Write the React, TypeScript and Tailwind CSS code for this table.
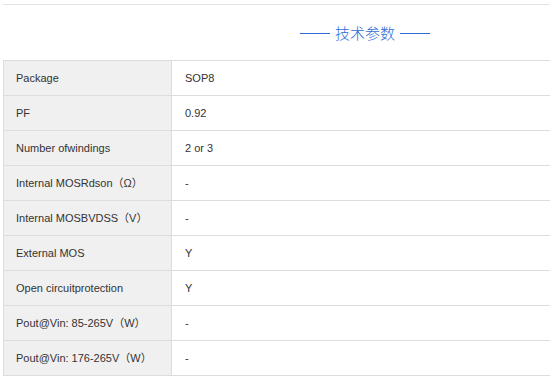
import React from "react";

type Spec = {
  label: string;
  value: string;
};

const specs: Spec[] = [
  { label: "Package", value: "SOP8" },
  { label: "PF", value: "0.92" },
  { label: "Number ofwindings", value: "2 or 3" },
  { label: "Internal MOSRdson（Ω）", value: "-" },
  { label: "Internal MOSBVDSS（V）", value: "-" },
  { label: "External MOS", value: "Y" },
  { label: "Open circuitprotection", value: "Y" },
  { label: "Pout@Vin: 85-265V（W）", value: "-" },
  { label: "Pout@Vin: 176-265V（W）", value: "-" },
];

export default function App() {
  return (
    <div className="w-[550px] h-[382px] overflow-hidden bg-white font-['Liberation_Sans',Arial,'Noto_Sans_CJK_SC',sans-serif]">
      <div className="w-[724px] ml-[3px] mt-[4px] border-t border-[#e3e3e3]">
        {/* Title */}
        <div className="h-[55px] flex items-center justify-center pt-[1px]">
          <h3 className="flex items-center gap-[5px] text-[15px] text-[#2f6bd4] font-normal">
            <span className="inline-block w-[30px] h-px bg-[#2f6bd4]" />
            <span className="font-['Noto_Sans_CJK_SC',sans-serif] font-light leading-[20px]">技术参数</span>
            <span className="inline-block w-[30px] h-px bg-[#2f6bd4]" />
          </h3>
        </div>
        {/* Spec table */}
        <table className="w-full border-collapse text-[11px] text-[#333]">
          <tbody>
            {specs.map((s) => (
              <tr key={s.label} className="h-[35px]">
                <td className="w-[168px] border border-[#dddddd] bg-[#f0f0f0] pl-[12px] align-middle">
                  {s.label}
                </td>
                <td className="border border-[#dddddd] pl-[13px] align-middle">
                  {s.value}
                </td>
              </tr>
            ))}
          </tbody>
        </table>
      </div>
    </div>
  );
}
